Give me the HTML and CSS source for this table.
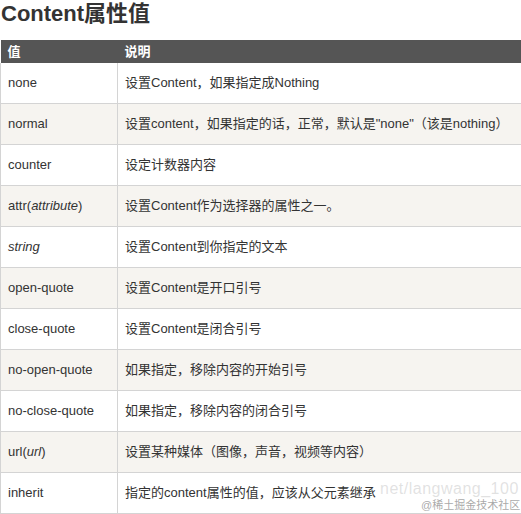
FILE: index.html
```html
<!DOCTYPE html>
<html lang="zh">
<head>
<meta charset="utf-8">
<link rel="stylesheet" href="styles.css">
</head>
<body>
<h2 class="title">Content属性值</h2>
<table class="ref">
  <thead>
    <tr><th class="c1">值</th><th>说明</th></tr>
  </thead>
  <tbody>
    <tr><td class="c1">none</td><td>设置Content，如果指定成Nothing</td></tr>
    <tr class="alt"><td class="c1">normal</td><td>设置content，如果指定的话，正常，默认是"none"（该是nothing）</td></tr>
    <tr><td class="c1">counter</td><td>设定计数器内容</td></tr>
    <tr class="alt"><td class="c1">attr(<i>attribute</i>)</td><td>设置Content作为选择器的属性之一。</td></tr>
    <tr><td class="c1"><i>string</i></td><td>设置Content到你指定的文本</td></tr>
    <tr class="alt"><td class="c1">open-quote</td><td>设置Content是开口引号</td></tr>
    <tr><td class="c1">close-quote</td><td>设置Content是闭合引号</td></tr>
    <tr class="alt"><td class="c1">no-open-quote</td><td>如果指定，移除内容的开始引号</td></tr>
    <tr><td class="c1">no-close-quote</td><td>如果指定，移除内容的闭合引号</td></tr>
    <tr class="alt"><td class="c1">url(<i>url</i>)</td><td>设置某种媒体（图像，声音，视频等内容）</td></tr>
    <tr><td class="c1">inherit</td><td>指定的content属性的值，应该从父元素继承</td></tr>
  </tbody>
</table>
<div class="wm1">net/langwang_100</div>
<div class="wm2">@稀土掘金技术社区</div>
</body>
</html>
```
FILE: styles.css
```css
html, body {
  margin: 0;
  padding: 0;
  background: #fff;
}
body {
  position: relative;
  width: 521px;
  height: 514px;
  overflow: hidden;
  font-family: "Liberation Sans", "Noto Sans CJK SC", sans-serif;
  color: #333;
}
.title {
  margin: 0 0 12px 1px;
  font-size: 22px;
  line-height: 28px;
  font-weight: bold;
  color: #333;
}
.ref {
  border-collapse: collapse;
  width: 540px;
  font-size: 13px;
}
.ref th {
  background: #555;
  color: #fff;
  text-align: left;
  font-weight: bold;
  font-size: 13px;
  line-height: 19px;
  padding: 2px 7px;
  height: 19px;
}
.ref td {
  padding: 10px 7px;
  line-height: 20px;
  height: 20px;
  border-bottom: 1px solid #d4d4d4;
  vertical-align: middle;
}
.ref td.c1 {
  border-left: 1px solid #d4d4d4;
  border-right: 1px solid #d4d4d4;
}
.ref .c1 {
  width: 102px;
}
.ref tr.alt td {
  background: #f6f4f0;
}
.wm1 {
  position: absolute;
  left: 380px;
  top: 480px;
  font-size: 16px;
  letter-spacing: 0.5px;
  color: rgba(170, 170, 170, 0.35);
  white-space: nowrap;
}
.wm2 {
  position: absolute;
  left: 421px;
  top: 496px;
  font-size: 11px;
  color: rgba(140, 140, 140, 0.75);
  white-space: nowrap;
}
```
